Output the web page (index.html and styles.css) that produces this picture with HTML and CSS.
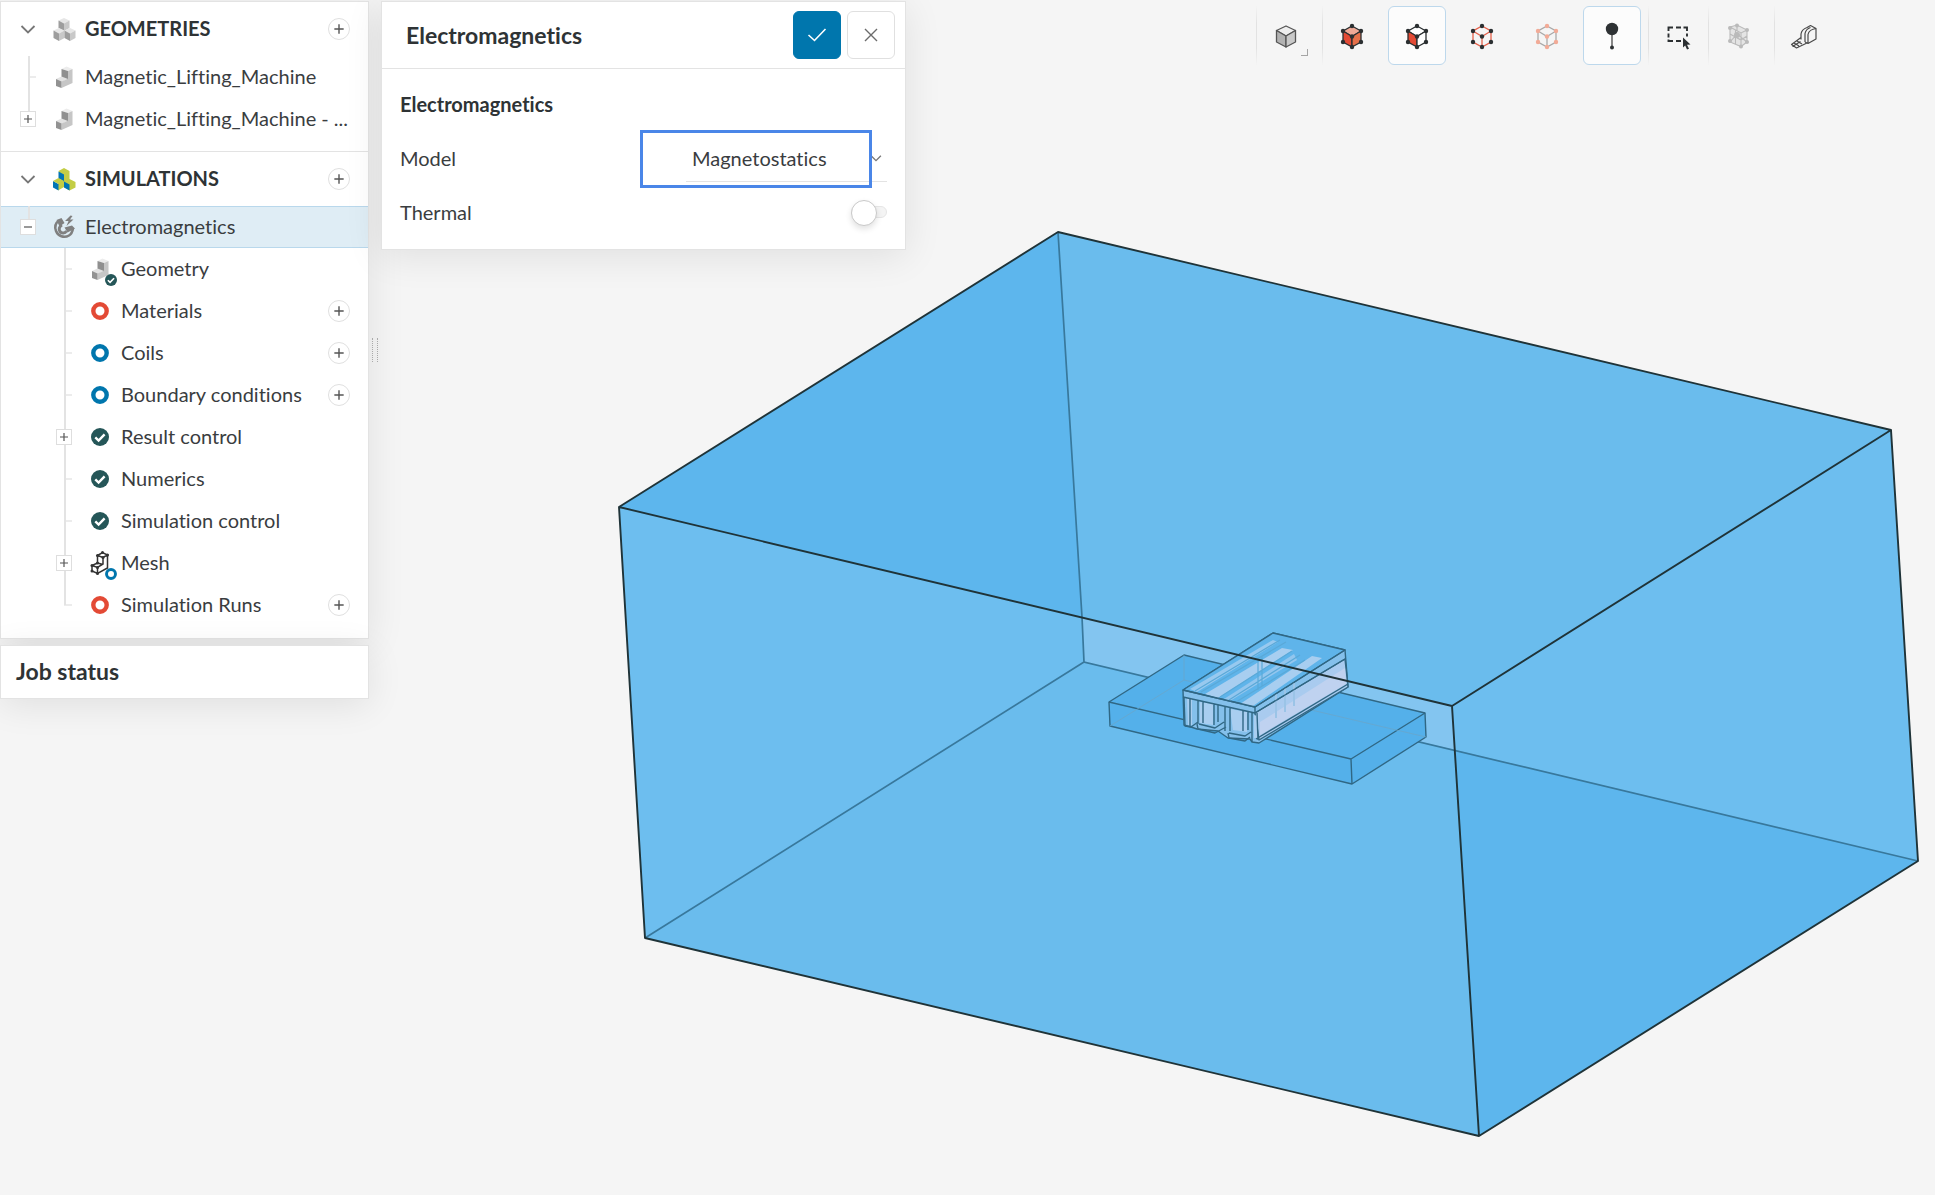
FILE: index.html
```html
<!DOCTYPE html>
<html lang="en">
<head>
<meta charset="utf-8">
<title>Electromagnetics</title>
<link rel="stylesheet" href="styles.css">
</head>
<body>
<svg class="defs" width="0" height="0" aria-hidden="true">
  <symbol id="i-chevron" viewBox="0 0 16 16"><path d="M1.500 5l6.500 6.500L14.500 5" fill="none" stroke="#777" stroke-width="1.800"/></symbol>
  <symbol id="i-plus" viewBox="0 0 12 12"><path d="M6 2v8M2 6h8" fill="none" stroke="#555" stroke-width="1.200"/></symbol>
  <symbol id="i-minus" viewBox="0 0 12 12"><path d="M2 6h8" fill="none" stroke="#555" stroke-width="1.200"/></symbol>
  <symbol id="i-part" viewBox="0 0 26 26">
    <path d="M10.500 5l5-2.500 6 2.500-4.500 2z" fill="#ececec"/>
    <path d="M10.500 5l6.500 2v9l-6.500-2.500z" fill="#8f8f8f"/>
    <path d="M5 15l5.500-2.500 6.500 2.500-6.500 3z" fill="#e2e2e2"/>
    <path d="M17 7l4.500-2v14l-11 5v-6.500l6.500-2.500z" fill="#c6c6c6"/>
    <path d="M5 15l5.500 2.500V24L5 22z" fill="#929292"/>
  </symbol>
  <symbol id="i-cube" viewBox="0 0 12 13"><path d="M6 0l5.500 2.500L6 5.500.5 2.500z" fill="#e6e6e6"/><path d="M.5 2.500L6 5.500V13L.5 10z" fill="#9d9d9d"/><path d="M11.500 2.500L6 5.500V13l5.500-3z" fill="#c8c8c8"/></symbol>
  <symbol id="i-parts" viewBox="0 0 26 26">
    <use href="#i-cube" x="7" y="2" width="12" height="13"/>
    <use href="#i-cube" x="2" y="12" width="12" height="13"/>
    <use href="#i-cube" x="13" y="12" width="12" height="13"/>
  </symbol>
  <symbol id="i-sims" viewBox="0 0 26 26">
    <path d="M7.500 5l5.500-3 5.500 3v8l6 3v5.500L18.500 24.500 13 21l-6 3.500v-9l5-2.500z" fill="#c3cd45"/>
    <path d="M7.500 5.500l5.500 3v7l-5.500-3zM2 15l5.500 3v6.500L2 21.500zM13 15.500l5.500 3v6L13 21.500z" fill="#0075b4"/>
    <path d="M2 15l5.500-3 5.500 3-5.500 3z" fill="#c3cd45"/>
  </symbol>
  <symbol id="i-magnet" viewBox="0 0 26 26">
    <path d="M8 6.500C4.500 9 3.500 13 5 17c2 5 8 7.500 13 4.500 2.500-1.500 3.500-4 4-7" fill="none" stroke="#808080" stroke-width="2.500"/>
    <path d="M11 11c-3 1.500-3.500 4.500-2 6.500s5 2 6.500-.5" fill="none" stroke="#808080" stroke-width="3"/>
    <path d="M5.500 6l5-2 3 5-5 3.500zM13.500 13.500l7.500-2 3 3-7.500 4z" fill="#808080"/>
    <path d="M19.500 1.500L14 7h3.500L15.500 12l7-6.500H19l2.500-3.500z" fill="#808080"/>
  </symbol>
  <symbol id="i-ok" viewBox="0 0 18 18"><circle cx="9" cy="9" r="9" fill="#255658"/><path d="M4.300 9.300l3.300 3.200 6-6.200" fill="none" stroke="#fff" stroke-width="2.400"/></symbol>
  <symbol id="i-red" viewBox="0 0 18 18"><circle cx="9" cy="9" r="6.700" fill="#fff" stroke="#e34a35" stroke-width="4.400"/></symbol>
  <symbol id="i-blue" viewBox="0 0 18 18"><circle cx="9" cy="9" r="6.700" fill="#fff" stroke="#0076ad" stroke-width="4.400"/></symbol>
  <symbol id="i-mesh" viewBox="0 0 26 26">
    <path d="M10.500 5.500l5-3 5 2.500-4.500 2.500zM10.500 5.500V13L5 15.500V21l5.500 2.500L20.500 18V5M16 7.500V14l-5.500 3.500L5 15.500M10.500 13l5.500 1.500M10.500 17.500v6" fill="none" stroke="#333" stroke-width="1.500"/>
    <g fill="#333"><circle cx="10.500" cy="5.500" r="1.500"/><circle cx="15.500" cy="2.500" r="1.500"/><circle cx="20.500" cy="5" r="1.500"/><circle cx="16" cy="7.500" r="1.500"/><circle cx="5" cy="15.500" r="1.500"/><circle cx="5" cy="21" r="1.500"/><circle cx="10.500" cy="17.500" r="1.500"/><circle cx="10.500" cy="23.500" r="1.500"/><circle cx="10.500" cy="13" r="1.500"/></g>
  </symbol>
</svg>

<main class="app">
  <svg class="viewer" viewBox="0 0 1935 1195" preserveAspectRatio="xMaxYMin meet" role="img" aria-label="3D model of the lifting machine inside its enclosure">
    <g>
      <path d="M1058 232L1891 430L1918 861L1479 1136L645 938L619 507z" fill="#6abced"/>
      <path d="M1058 232L619 507L1082 617z" fill="#5db6ed"/>
      <path d="M619 507L1082 617L1084 662L645 938z" fill="#6dbeef"/>
      <path d="M1452 706L1891 430L1918 861L1455 750z" fill="#6dbeef"/>
      <path d="M1455 750L1918 861L1479 1136z" fill="#5db6ed"/>
      <path d="M1082 617L1452 706L1455 750L1084 662z" fill="#83c5f0"/>
    </g>
    <path d="M1058 232L1082 617L1084 662L1918 861M1084 662L645 938" fill="none" stroke="#38789c" stroke-width="1.700"/>
    <g stroke="#306784" stroke-width="1.400" stroke-linejoin="round">
      <path d="M1109 702L1184 655L1425 713L1426 737L1352 784L1110 726z" fill="#54b0ea"/>
      <path d="M1109 702L1351 759L1425 713M1351 759L1352 784" fill="none"/>
      <path d="M1184 655V680L1110 726M1184 680L1426 737" fill="none" stroke="#6aa6ca" stroke-width=".8"/>
      <path d="M1183 690L1273 633L1345 650L1348 687L1259 743L1252 742L1250 739L1228 738L1218 731L1197 729L1191 727L1184 725z" fill="#84c0eb"/>
      <path d="M1255 713L1345 659L1348 687L1259 740z" fill="#a9cbef"/>
      <path d="M1183 690L1273 633L1345 650L1255 707z" fill="#5fb4ea"/>
      <g stroke="none">
        <path d="M1190 689L1273 640L1278 642L1197 692z" fill="#98c9ef"/>
        <path d="M1205 694L1282 648L1293 650L1218 698zM1240 704L1312 656L1322 658L1253 706z" fill="#a8cef0"/>
        <path d="M1224 699L1294 654L1297 660L1230 701z" fill="#93c6ee"/>
        <path d="M1187 698h5v27h-4zM1200 702l13 2v21l-13-2zM1230 709l17 3v20l-14-2zM1254 715l4 1v22h-4z" fill="#a9cef0"/>
        <path d="M1260 735L1346 684L1345 668L1260 722z" fill="#bfd2f0"/>
      </g>
      <path d="M1195 691L1280 640M1201 692L1286 642M1220 697L1292 651M1229 700L1300 655M1236 702L1305 660M1258 658V690M1262 656V686" fill="none" stroke="#5aa9d8" stroke-width="1.200"/>
      <path d="M1276 694V718M1285 688V712M1294 683V706" fill="none" stroke="#9bc4e7" stroke-width="2"/>
      <path d="M1183 690L1255 707L1345 650M1255 707V713L1345 659M1183 697L1255 713M1184 697L1185 726L1191 727L1198 722M1190 699V727M1198 700V724M1203 702V723M1214 704V725M1218 705V722M1225 706V731M1230 708V731M1243 710V731M1248 711V730M1252 713V742M1257 713L1258 740M1197 724L1198 729L1215 733L1226 727M1199 724L1215 728L1224 722M1228 733L1229 738L1245 741L1250 737M1229 733L1245 736L1251 732M1256 739L1348 684" fill="none"/>
    </g>
    <path d="M619 507L1058 232L1891 430L1918 861L1479 1136L645 938zL1452 706L1891 430M1452 706L1479 1136" fill="none" stroke="#1f3338" stroke-width="1.900" stroke-linejoin="round"/>
  </svg>

  <div class="side">
    <div class="side-panels">
      <nav class="card tree" aria-label="Project tree">
        <section class="section">
          <h2 class="row head"><button class="twist" aria-label="Collapse geometries"><svg class="s16"><use href="#i-chevron"/></svg></button><svg class="icon"><use href="#i-parts"/></svg><span class="label">GEOMETRIES</span><button class="add" aria-label="Add geometry"><svg class="s14"><use href="#i-plus"/></svg></button></h2>
          <ul class="list">
            <li class="row"><span class="branch"></span><svg class="icon"><use href="#i-part"/></svg><a class="label" href="#">Magnetic_Lifting_Machine</a></li>
            <li class="row"><span class="branch last fold"><button class="expand" aria-label="Expand"><svg class="s12"><use href="#i-plus"/></svg></button></span><svg class="icon"><use href="#i-part"/></svg><a class="label" href="#">Magnetic_Lifting_Machine - ...</a></li>
          </ul>
        </section>
        <section class="section">
          <h2 class="row head"><button class="twist" aria-label="Collapse simulations"><svg class="s16"><use href="#i-chevron"/></svg></button><svg class="icon"><use href="#i-sims"/></svg><span class="label">SIMULATIONS</span><button class="add" aria-label="Add simulation"><svg class="s14"><use href="#i-plus"/></svg></button></h2>
          <ul class="list">
            <li class="row active"><span class="branch last fold"><button class="expand" aria-label="Collapse"><svg class="s12"><use href="#i-minus"/></svg></button></span><svg class="icon"><use href="#i-magnet"/></svg><a class="label" href="#">Electromagnetics</a></li>
          </ul>
          <ul class="list nested">
            <li class="row"><span class="branch"></span><span class="icon badged"><svg class="icon"><use href="#i-part"/></svg><svg class="badge"><use href="#i-ok"/></svg></span><a class="label" href="#">Geometry</a></li>
            <li class="row"><span class="branch"></span><svg class="icon state"><use href="#i-red"/></svg><a class="label" href="#">Materials</a><button class="add" aria-label="Add material"><svg class="s14"><use href="#i-plus"/></svg></button></li>
            <li class="row"><span class="branch"></span><svg class="icon state"><use href="#i-blue"/></svg><a class="label" href="#">Coils</a><button class="add" aria-label="Add coil"><svg class="s14"><use href="#i-plus"/></svg></button></li>
            <li class="row"><span class="branch"></span><svg class="icon state"><use href="#i-blue"/></svg><a class="label" href="#">Boundary conditions</a><button class="add" aria-label="Add boundary condition"><svg class="s14"><use href="#i-plus"/></svg></button></li>
            <li class="row"><span class="branch fold"><button class="expand" aria-label="Expand"><svg class="s12"><use href="#i-plus"/></svg></button></span><svg class="icon state"><use href="#i-ok"/></svg><a class="label" href="#">Result control</a></li>
            <li class="row"><span class="branch"></span><svg class="icon state"><use href="#i-ok"/></svg><a class="label" href="#">Numerics</a></li>
            <li class="row"><span class="branch"></span><svg class="icon state"><use href="#i-ok"/></svg><a class="label" href="#">Simulation control</a></li>
            <li class="row"><span class="branch fold"><button class="expand" aria-label="Expand"><svg class="s12"><use href="#i-plus"/></svg></button></span><span class="icon badged"><svg class="icon"><use href="#i-mesh"/></svg><svg class="badge"><use href="#i-blue"/></svg></span><a class="label" href="#">Mesh</a></li>
            <li class="row"><span class="branch last"></span><svg class="icon state"><use href="#i-red"/></svg><a class="label" href="#">Simulation Runs</a><button class="add" aria-label="Add simulation run"><svg class="s14"><use href="#i-plus"/></svg></button></li>
          </ul>
        </section>
      </nav>
      <section class="card jobs"><h2 class="title">Job status</h2></section>
    </div>
    <div class="splitter"><span class="grip"></span></div>
  </div>

  <form class="card settings">
    <header class="settings-head">
      <h1 class="title">Electromagnetics</h1>
      <button type="button" class="action apply" aria-label="Apply"><svg width="20" height="20" viewBox="0 0 20 20"><path d="M1.500 10l6 5.500L18.500 4" fill="none" stroke="#fff" stroke-width="1.600"/></svg></button>
      <button type="button" class="action" aria-label="Close"><svg width="20" height="20" viewBox="0 0 20 20"><path d="M4 4l12 12M16 4L4 16" fill="none" stroke="#6b6b6b" stroke-width="1.400"/></svg></button>
    </header>
    <div class="fields">
      <h2 class="field sub">Electromagnetics</h2>
      <div class="field">
        <label for="model">Model</label>
        <div class="picker">
          <select id="model" class="select"><option>Magnetostatics</option></select>
          <svg class="caret"><use href="#i-chevron"/></svg>
          <span class="highlight"></span>
        </div>
      </div>
      <div class="field"><label for="thermal">Thermal</label><input class="switch" type="checkbox" id="thermal"></div>
    </div>
  </form>

  <div class="toolbar" role="toolbar" aria-label="View tools">
    <div class="group ruled">
      <button class="tool corner" aria-label="Shading"><svg width="28" height="28" viewBox="0 0 28 28"><g stroke="#555" stroke-width="1.300" stroke-linejoin="round"><path d="M14 4l9.500 4.500L14 14 4.500 8.500z" fill="#eee"/><path d="M4.500 8.500L14 14v11l-9.500-5z" fill="#b2b2b2"/><path d="M23.500 8.500L14 14v11l9.500-5z" fill="#c9c9c9"/></g></svg></button>
    </div>
    <div class="group ruled">
      <button class="tool" aria-label="Select volumes"><svg width="28" height="28" viewBox="0 0 28 28"><g stroke="#2b2f31" stroke-width="1.300"><path d="M14 4l9 5-9 5.500L5 9z" fill="#efa996"/><path d="M5 9l9 5.500V25l-9-5z" fill="#e34a35"/><path d="M23 9l-9 5.500V25l9-5z" fill="#e5704a"/></g><g fill="#2b2f31"><circle cx="14" cy="4" r="2.200"/><circle cx="5" cy="9" r="2.200"/><circle cx="23" cy="9" r="2.200"/><circle cx="14" cy="14.500" r="2.200"/><circle cx="5" cy="20" r="2.200"/><circle cx="23" cy="20" r="2.200"/><circle cx="14" cy="25" r="2.200"/></g></svg></button>
      <button class="tool on" aria-label="Select faces" aria-pressed="true"><svg width="28" height="28" viewBox="0 0 28 28"><g stroke="#2b2f31" stroke-width="1.300"><path d="M14 4l9 5-9 5.500L5 9z" fill="#fff"/><path d="M5 9l9 5.500V25l-9-5z" fill="#e34a35"/><path d="M23 9l-9 5.500V25l9-5z" fill="#fff"/></g><g fill="#2b2f31"><circle cx="14" cy="4" r="2.200"/><circle cx="5" cy="9" r="2.200"/><circle cx="23" cy="9" r="2.200"/><circle cx="14" cy="14.500" r="2.200"/><circle cx="5" cy="20" r="2.200"/><circle cx="23" cy="20" r="2.200"/><circle cx="14" cy="25" r="2.200"/></g></svg></button>
      <button class="tool" aria-label="Select edges"><svg width="28" height="28" viewBox="0 0 28 28"><path d="M14 4l9 5v11l-9 5-9-5V9zM5 9l9 5.500L23 9M14 14.500V25" fill="none" stroke="#e4604a" stroke-width="1.300"/><g fill="#2b2f31"><circle cx="14" cy="4" r="2.200"/><circle cx="5" cy="9" r="2.200"/><circle cx="23" cy="9" r="2.200"/><circle cx="14" cy="14.500" r="2.200"/><circle cx="5" cy="20" r="2.200"/><circle cx="23" cy="20" r="2.200"/><circle cx="14" cy="25" r="2.200"/></g></svg></button>
      <button class="tool" aria-label="Select vertices"><svg width="28" height="28" viewBox="0 0 28 28"><path d="M14 4l9 5v11l-9 5-9-5V9zM5 9l9 5.500L23 9M14 14.500V25" fill="none" stroke="#a9a9a9" stroke-width="1.300"/><g fill="#f2ab97"><circle cx="14" cy="4" r="2.200"/><circle cx="5" cy="9" r="2.200"/><circle cx="23" cy="9" r="2.200"/><circle cx="14" cy="14.500" r="2.200"/><circle cx="5" cy="20" r="2.200"/><circle cx="23" cy="20" r="2.200"/><circle cx="14" cy="25" r="2.200"/></g></svg></button>
    </div>
    <div class="group">
      <button class="tool on" aria-label="Pin" aria-pressed="true"><svg width="28" height="30" viewBox="0 0 28 30"><path d="M14 8v18" stroke="#6a6a6a" stroke-width="1.600"/><circle cx="14" cy="8" r="6.200" fill="#2e3234"/><circle cx="14" cy="26.500" r="2" fill="#2e3234"/></svg></button>
    </div>
    <div class="group ruled tight">
      <button class="tool" aria-label="Box select"><svg width="28" height="28" viewBox="0 0 28 28"><path d="M4.500 9V5.500H9M12 5.500h5M19.500 5.500h3.500V9M23 11.500v3M4.500 11.500v4M4.500 17.500V19H9M12 19h5" fill="none" stroke="#2b2f31" stroke-width="1.900"/><path d="M19 15.500l7.500 7-3.500.2 2 4-2 .9-1.800-4-2.200 2z" fill="#2b2f31"/></svg></button>
    </div>
    <div class="group ruled">
      <button class="tool" aria-label="Mesh clip"><svg width="28" height="28" viewBox="0 0 28 28"><path d="M6 5l7-2 10 5v13l-6 4-11-5z" fill="#e4e4e4"/><path d="M6 5l7-2 10 5v12l-6 4.500L6 20zM6 5l11 6 6-3M17 11v13.500M6 12l11 6 6-4M11.500 8v14M13 3v9L6 20M13 12l10 8" fill="none" stroke="#bababa" stroke-width="1.100"/><g fill="#bababa"><circle cx="6" cy="6" r="2"/><circle cx="13" cy="3.500" r="2"/><circle cx="23" cy="8" r="2"/><circle cx="6" cy="19" r="2"/><circle cx="17" cy="24.500" r="2"/><circle cx="23" cy="20" r="2"/><circle cx="13" cy="13" r="3"/></g></svg></button>
    </div>
    <div class="group ruled">
      <button class="tool" aria-label="Measure"><svg width="28" height="28" viewBox="0 0 28 28"><path d="M11 17.500V12c.5-3 3-5.500 6-6.500L20.500 3.500 26 6.500V17l-8 4.500-3-1.500M18 21.500V12.500c.5-3 4-5.500 8-6M15 20v-8.500c.5-2.500 2.500-5 5.500-6M11 15.500L1.500 22.500l5 3.500L18 20.500M4 21l5 3M7 19l5 3M2.500 24.500l8-5" fill="none" stroke="#4a4a4a" stroke-width="1.200" stroke-linejoin="round"/></svg></button>
    </div>
  </div>
</main>
</body>
</html>
```
FILE: styles.css
```css
* { box-sizing: border-box; }

body {
  margin: 0;
  background: #f5f5f5;
  color: #3a3d3f;
  font: 20px/24px Lato, "Open Sans", sans-serif;
  font-variant-ligatures: none;
}

h1, h2, ul { margin: 0; padding: 0; }
ul { list-style: none; }
button { padding: 0; border: 0; background: none; font: inherit; cursor: pointer; }
svg { display: block; flex: none; }
.defs { position: absolute; }
.s12 { width: 12px; height: 12px; }
.s14 { width: 14px; height: 14px; }
.s16 { width: 16px; height: 16px; }

.app {
  position: relative;
  display: flex;
  align-items: flex-start;
  min-height: 100vh;
  padding-top: 1px;
}

.viewer {
  position: absolute;
  inset: 0;
  width: 100%;
  height: 100%;
}

.side, .settings, .toolbar { position: relative; }

.card {
  background: #fff;
  border: 1px solid #e3e3e3;
  box-shadow: 0 6px 36px rgba(0, 0, 0, .09);
}

.title { font-size: 23px; line-height: 26px; font-weight: 700; color: #2e3335; }

/* Project tree */
.side { display: flex; flex: none; }
.side-panels { display: flex; flex-direction: column; gap: 6px; width: 369px; }
.section { padding-bottom: 11px; border-bottom: 1px solid #e3e3e3; }
.section:last-child { border-bottom: 0; padding-bottom: 12px; }

.row {
  display: flex;
  align-items: center;
  height: 42px;
  padding: 0 18px 0 19px;
}
.head { height: 54px; font-size: 20px; font-weight: 700; color: #2e3335; }
.nested .row { padding-left: 55px; }
.active {
  background: #dfedf5;
  box-shadow: inset 0 1px #b9d8ec, inset 0 -1px #b9d8ec;
}

.label { flex: 1; padding-bottom: 2px; color: inherit; text-decoration: none; white-space: nowrap; }
.icon { width: 26px; height: 26px; }
.row > .icon { flex: none; margin: 0 8px 0 15px; }
.state { padding: 4px; }
.badged { position: relative; }
.badge { position: absolute; left: 18px; top: 18px; width: 12px; height: 12px; }

.twist { display: flex; width: 16px; }

.branch {
  display: flex;
  align-items: center;
  align-self: stretch;
  flex: none;
  width: 16px;
  background:
    linear-gradient(#e3e3e3, #e3e3e3) 8px 0 / 2px 100% no-repeat,
    linear-gradient(#ececec, #ececec) 10px 50% / 6px 2px no-repeat;
}
.branch.last {
  background:
    linear-gradient(#e3e3e3, #e3e3e3) 8px 0 / 2px 50% no-repeat,
    linear-gradient(#ececec, #ececec) 8px 50% / 8px 2px no-repeat;
}
.expand {
  display: flex;
  align-items: center;
  justify-content: center;
  width: 16px;
  height: 16px;
  background: #fff;
  border: 1px solid #dedede;
}
.add {
  display: flex;
  align-items: center;
  justify-content: center;
  width: 22px;
  height: 22px;
  border: 1px solid #e0e0e0;
  border-radius: 50%;
  background: #fff;
}

.jobs { padding: 12px 15px 14px; }

.splitter { display: flex; align-items: center; justify-content: center; width: 12px; }
.grip { width: 6px; height: 24px; border: dotted #aaa; border-width: 0 1px; }

/* Settings panel */
.settings { flex: none; width: 525px; }
.settings-head {
  display: flex;
  align-items: center;
  gap: 6px;
  height: 67px;
  padding: 0 10px 0 24px;
  border-bottom: 1px solid #e3e3e3;
}
.settings-head .title { flex: 1; }
.action {
  display: flex;
  align-items: center;
  justify-content: center;
  width: 48px;
  height: 48px;
  border: 1px solid #e0e0e0;
  border-radius: 6px;
  background: #fff;
}
.apply { background: #0076ad; border-color: #0076ad; }

.fields { padding: 8px 18px 10px; }
.field { display: flex; align-items: center; justify-content: space-between; height: 54px; }
.sub { font-size: 20px; font-weight: 700; color: #2e3335; }

.picker { position: relative; width: 201px; }
.select {
  display: block;
  width: 100%;
  height: 48px;
  padding: 0 0 0 6px;
  border: 0;
  border-bottom: 1px solid #e3e3e3;
  border-radius: 0;
  appearance: none;
  background: none;
  color: inherit;
  font: inherit;
  font-variant-ligatures: none;
}
.caret { position: absolute; right: 5px; top: 18px; width: 12px; height: 12px; pointer-events: none; }
.highlight {
  position: absolute;
  left: -46px;
  right: 15px;
  top: -4px;
  bottom: -6px;
  border: 3px solid #4a86e8;
  pointer-events: none;
}

.switch {
  position: relative;
  width: 36px;
  height: 24px;
  margin: 0;
  appearance: none;
}
.switch::before {
  content: "";
  position: absolute;
  inset: 6px 0;
  border: 1px solid #e6e6e6;
  border-radius: 6px;
  background: #f4f4f4;
}
.switch::after {
  content: "";
  position: absolute;
  left: 0;
  top: 0;
  width: 24px;
  height: 24px;
  border: 1px solid #c9c9c9;
  border-radius: 50%;
  background: #fff;
  box-shadow: 0 3px 6px rgba(0, 0, 0, .12);
}

/* View tools */
.toolbar { display: flex; margin: 5px 95px 0 auto; }
.group { display: flex; gap: 7px; padding-right: 7px; }
.ruled {
  border-left: 1px solid;
  border-image: linear-gradient(transparent, #e2e2e2 30%, #e2e2e2 70%, transparent) 1;
}
.tight { padding-right: 1px; }
.tool {
  position: relative;
  display: flex;
  align-items: center;
  justify-content: center;
  width: 58px;
  height: 59px;
  border: 1px solid transparent;
  border-radius: 6px;
}
.on { background: #fcfcfc; border-color: #bdd8ec; }
.corner::after {
  content: "";
  position: absolute;
  right: 6px;
  bottom: 8px;
  width: 6px;
  height: 6px;
  border: solid #a5a5a5;
  border-width: 0 1px 1px 0;
}
```
